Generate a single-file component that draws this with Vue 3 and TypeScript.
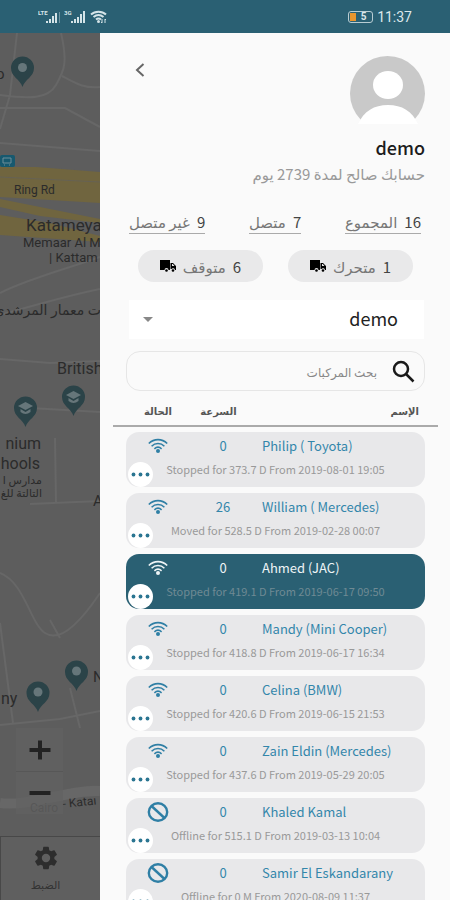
<script setup lang="ts">
import { ref } from 'vue'

interface Vehicle {
  name: string
  speed: number
  online: boolean
  summary: string
}

const account = ref('demo')
const query = ref('')
const selected = ref(2)

const totals = [
  { count: 16, label: 'المجموع' },
  { count: 7, label: 'متصل' },
  { count: 9, label: 'غير متصل' },
]

const motion = [
  { count: 1, label: 'متحرك' },
  { count: 6, label: 'متوقف' },
]

const vehicles: Vehicle[] = [
  { name: 'Philip ( Toyota)', speed: 0, online: true, summary: 'Stopped for 373.7 D From 2019-08-01 19:05' },
  { name: 'William ( Mercedes)', speed: 26, online: true, summary: 'Moved for 528.5 D From 2019-02-28 00:07' },
  { name: 'Ahmed (JAC)', speed: 0, online: true, summary: 'Stopped for 419.1 D From 2019-06-17 09:50' },
  { name: 'Mandy (Mini Cooper)', speed: 0, online: true, summary: 'Stopped for 418.8 D From 2019-06-17 16:34' },
  { name: 'Celina (BMW)', speed: 0, online: true, summary: 'Stopped for 420.6 D From 2019-06-15 21:53' },
  { name: 'Zain Eldin (Mercedes)', speed: 0, online: true, summary: 'Stopped for 437.6 D From 2019-05-29 20:05' },
  { name: 'Khaled Kamal', speed: 0, online: false, summary: 'Offline for 515.1 D From 2019-03-13 10:04' },
  { name: 'Samir El Eskandarany', speed: 0, online: false, summary: 'Offline for 0 M From 2020-08-09 11:37' },
]
</script>

<template>
  <div class="screen">
    <header class="status-bar">
      <div class="signals">
        <svg width="22" height="14" viewBox="0 0 22 14" aria-hidden="true">
          <text x="0" y="5">LTE</text>
          <path d="M8 13v-2h2v2zM11 13V9h2v4zM14 13V6h2v7zM17 13V3h2v10z" />
          <path d="M21 2h1v11h-1z" opacity=".4" />
        </svg>
        <svg width="22" height="14" viewBox="0 0 22 14" aria-hidden="true">
          <text x="0" y="5">3G</text>
          <path d="M7 13v-2h2v2zM10 13V9h2v4zM13 13V7h2v6zM16 13V4h2v9zM19 13V1h2v12z" />
        </svg>
        <svg width="17" height="14" viewBox="0 0 17 14" aria-hidden="true">
          <path d="M1 4.500C5 .800 12 .800 16 4.500M3.500 7C6.500 4.500 10.500 4.500 13.500 7M6 9.500C7.500 8.300 9.500 8.300 11 9.500" class="arc" />
          <circle cx="8.500" cy="11.500" r="1.500" />
          <path d="M12 9v4l-1-1M15 13V9l1 1" class="tiny" />
        </svg>
      </div>
      <div class="clock">
        <span class="battery"><i></i><b>5</b></span>
        <time>11:37</time>
      </div>
    </header>

    <main class="body">
      <section class="map" aria-label="Map">
        <svg class="tiles" width="100%" height="100%" aria-hidden="true">
          <g class="road">
            <path d="M17 0 10 62 0 96M61 0C68 30 64 38 56 52S30 66 0 62M62 43C75 50 85 56 100 54M0 75H65L100 94" />
            <path d="M0 110 100 118M0 260C30 245 70 235 100 224M0 282C35 272 70 262 100 256" />
            <path d="M0 326 50 330 100 328M30 375 100 379M55 405 56 470M30 471 100 468" />
            <path d="M0 540C25 550 30 590 45 600S80 590 100 560M0 590 13 690M50 587 60 605M70 655 80 695" />
            <path d="M0 692 60 686 100 678" />
          </g>
          <path class="minor" d="M0 770C30 774 70 756 100 758" />
          <g class="highway">
            <path d="M0 134 36 134 100 139V170L0 164z" />
            <path d="M0 166 100 186V190L40 183 0 174z" />
            <path d="M0 182 50 190 100 203V209L0 202z" />
          </g>
          <path class="median" d="M0 144 100 149" />
          <rect x="0" y="122" width="15" height="12" rx="2" fill="#17596f" />
          <path d="M3 125h8v5H3zM4 132h1M9 132h1" class="bus" />

          <g class="pin">
            <path id="pin-shape" d="M22.500 54C20 46 11 44 11 35a11.500 11.500 0 0 1 23 0C34 44 25 46 22.500 54z" />
            <circle cx="22.500" cy="34.500" r="4.500" class="hole" />
            <use href="#pin-shape" x="3" y="340" />
            <use href="#pin-shape" x="51" y="329" />
            <use href="#pin-shape" x="15.500" y="625" />
            <circle cx="38" cy="659" r="4.500" class="hole" />
            <use href="#pin-shape" x="54" y="604" />
            <circle cx="76.500" cy="638" r="4.500" class="hole" />
            <path class="hole" d="M18 373 25.500 369 33 373 25.500 377zM20.500 376 25.500 379 30.500 376V379Q25.500 383 20.500 379zM66 362 73.500 358 81 362 73.500 366zM68.500 365 73.500 368 78.500 365V368Q73.500 372 68.500 368z" />
          </g>

          <g class="label">
            <text x="-4" y="46" font-size="15">o</text>
            <text x="14" y="161" font-size="12">Ring Rd</text>
            <text x="26" y="198" font-size="17">Katameya</text>
            <text x="23" y="214" font-size="13">Memaar Al M</text>
            <text x="49" y="229" font-size="13">| Kattam</text>
            <text x="101" y="282" font-size="14" text-anchor="end">ت معمار المرشدي</text>
            <text x="57" y="341" font-size="16">British</text>
            <text x="41" y="416" font-size="16" text-anchor="end">nium</text>
            <text x="40" y="436" font-size="16" text-anchor="end">hools</text>
            <text x="42" y="451" font-size="11" text-anchor="end">مدارس ا</text>
            <text x="42" y="464" font-size="11" text-anchor="end">التالتة للغ</text>
            <text x="93" y="473" font-size="15">A</text>
            <text x="1" y="671" font-size="16">ny</text>
            <text x="93" y="649" font-size="15">N</text>
            <text x="30" y="779" font-size="12" class="faint">Cairo</text>
            <text x="63" y="775" font-size="12" transform="rotate(-6 63 775)">- Kataı</text>
          </g>
        </svg>

        <div class="zoom">
          <button type="button" aria-label="Zoom in">
            <svg width="22" height="22" viewBox="0 0 22 22"><path d="M11 1.500v19M.500 11h21" /></svg>
          </button>
          <button type="button" aria-label="Zoom out">
            <svg width="22" height="22" viewBox="0 0 22 22"><path d="M.500 11h21" /></svg>
          </button>
        </div>

        <button type="button" class="settings">
          <svg width="28" height="28" viewBox="0 0 24 24" aria-hidden="true">
            <path d="M19.140 12.940c.04-.3.06-.61.06-.94 0-.32-.02-.64-.07-.94l2.030-1.580a.49.49 0 0 0 .12-.61l-1.920-3.320a.488.488 0 0 0-.59-.22l-2.390.96c-.5-.38-1.030-.7-1.620-.94l-.36-2.540a.484.484 0 0 0-.48-.41h-3.840c-.24 0-.43.17-.47.41l-.36 2.540c-.59.24-1.130.57-1.620.94l-2.390-.96c-.22-.08-.47 0-.59.22L2.740 8.870c-.12.21-.08.47.12.61l2.030 1.580c-.05.3-.09.63-.09.94s.02.64.07.94l-2.030 1.580a.49.49 0 0 0-.12.61l1.920 3.320c.12.22.37.29.59.22l2.390-.96c.5.38 1.030.7 1.620.94l.36 2.540c.05.24.24.41.48.41h3.840c.24 0 .44-.17.47-.41l.36-2.540c.59-.24 1.130-.56 1.620-.94l2.390.96c.22.08.47 0 .59-.22l1.920-3.320c.12-.22.07-.47-.12-.61l-2.010-1.580zM12 15.600A3.600 3.600 0 1 1 12 8.400a3.600 3.600 0 0 1 0 7.200z" />
          </svg>
          <span>الضبط</span>
        </button>
      </section>

      <aside class="drawer" dir="rtl">
        <div class="profile">
          <div class="identity">
            <svg class="avatar" width="75" height="68" viewBox="0 0 75 68" aria-hidden="true">
              <circle cx="37.500" cy="37.500" r="37.500" fill="#c9c9c9" />
              <ellipse cx="38" cy="29" rx="15" ry="14" fill="#fff" />
              <path d="M8 68C14 55 24 49 38 49s24 6 30 19v8H8z" fill="#fff" />
            </svg>
            <h1>demo</h1>
            <p>حسابك صالح لمدة 2739 يوم</p>
          </div>
          <button type="button" class="back" aria-label="رجوع">
            <svg width="10" height="14" viewBox="0 0 10 14"><path d="M8.500 1 2 7l6.500 6" /></svg>
          </button>
        </div>

        <nav class="totals">
          <a v-for="item in totals" :key="item.label" href="#vehicles">
            <b>{{ item.count }}</b><span>{{ item.label }}</span>
          </a>
        </nav>

        <div class="motion">
          <button v-for="item in motion" :key="item.label" type="button">
            <b>{{ item.count }}</b>
            <span>{{ item.label }}</span>
            <svg width="16" height="12" viewBox="0 0 16 12" aria-hidden="true">
              <path d="M0 0h10v10H8.500a2 2 0 0 0-4 0H0zM10.500 3H13l3 3v4h-1a2 2 0 0 0-3.500-1h-1zM12 4v2h2.500L12.800 4z" fill-rule="evenodd" />
              <circle cx="6.500" cy="10.500" r="1.300" />
              <circle cx="13" cy="10.500" r="1.300" />
            </svg>
          </button>
        </div>

        <div class="picker">
          <select v-model="account" aria-label="الحساب">
            <option value="demo">demo</option>
          </select>
          <svg width="10" height="5" viewBox="0 0 10 5" aria-hidden="true"><path d="M0 0h10L5 5z" /></svg>
        </div>

        <label class="search">
          <svg width="23" height="23" viewBox="0 0 23 23" aria-hidden="true">
            <circle cx="9" cy="9" r="7" />
            <path d="m14 14 7.500 7.500" />
          </svg>
          <input v-model="query" type="text" placeholder="بحث المركبات" aria-label="بحث المركبات" />
        </label>

        <table id="vehicles" class="vehicles">
          <thead>
            <tr>
              <th scope="col">الإسم</th>
              <th scope="col">السرعة</th>
              <th scope="col">الحالة</th>
            </tr>
          </thead>
          <tbody>
            <tr v-for="(vehicle, index) in vehicles" :key="vehicle.name" :class="{ active: index === selected }" @click="selected = index">
              <td class="name" dir="ltr">{{ vehicle.name }}</td>
              <td class="speed">{{ vehicle.speed }}</td>
              <td class="state">
                <svg v-if="vehicle.online" class="wifi" width="20" height="16" viewBox="0 0 20 16" aria-hidden="true">
                  <path d="M.800 5.500C6 .300 14 .300 19.200 5.500M3.600 8.200C7.200 4.600 12.800 4.600 16.400 8.200M6.400 10.800C8.500 8.900 11.500 8.900 13.600 10.800" />
                  <circle cx="10" cy="13" r="2" />
                </svg>
                <svg v-else class="blocked" width="22" height="20" viewBox="0 0 22 20" aria-hidden="true">
                  <ellipse cx="11" cy="10" rx="9.200" ry="8.700" />
                  <path d="M4.500 4 17.500 16" />
                </svg>
              </td>
              <td class="summary" dir="ltr">{{ vehicle.summary }}</td>
              <td class="more">
                <button type="button" aria-label="المزيد" @click.stop>
                  <svg width="19" height="5" viewBox="0 0 19 5">
                    <circle cx="2.500" cy="2.500" r="1.900" />
                    <circle cx="9.500" cy="2.500" r="1.900" />
                    <circle cx="16.500" cy="2.500" r="1.900" />
                  </svg>
                </button>
              </td>
            </tr>
          </tbody>
        </table>
      </aside>
    </main>
  </div>
</template>

<style>
body {
  margin: 0;
  overflow: hidden;
}
</style>

<style scoped>
.screen {
  display: flex;
  flex-direction: column;
  height: 100vh;
  overflow: hidden;
  background: #fafafa;
  color: #222;
  font-family: "Noto Sans CJK SC", "DejaVu Sans", sans-serif;
}

.screen * {
  box-sizing: border-box;
}

button,
select,
input {
  padding: 0;
  border: 0;
  background: none;
  color: inherit;
  font: inherit;
}

svg {
  display: block;
  flex: none;
}

.status-bar {
  display: flex;
  flex: none;
  align-items: center;
  justify-content: space-between;
  height: 33px;
  padding: 0 38px;
  background: #2a6073;
  color: #dce8ec;
}

.signals,
.clock {
  display: flex;
  align-items: center;
  gap: 4px;
}

.signals svg {
  fill: #d5e4e8;
}

.signals text {
  font: bold 6px Roboto, sans-serif;
}

.signals .tiny,
.signals .arc {
  fill: none;
  stroke: #d5e4e8;
  stroke-width: 1;
}

.signals .arc {
  stroke-width: 2;
}

.clock time {
  font: 14px/16px Roboto, sans-serif;
}

.battery {
  display: flex;
  align-items: center;
  width: 25px;
  height: 12px;
  padding: 1px;
  border: 1px solid #b9cdd3;
  border-radius: 3px;
}

.battery i {
  width: 6px;
  height: 8px;
  background: #e8962e;
}

.battery b {
  flex: 1;
  font: bold 10px/9px Roboto, sans-serif;
  text-align: center;
}

.body {
  display: flex;
  flex: 1;
  min-height: 0;
}

.map {
  display: flex;
  flex: 0 0 100px;
  flex-direction: column;
  justify-content: flex-end;
  position: relative;
  overflow: hidden;
  background: #5d5d5d;
}

.tiles {
  position: absolute;
  inset: 0;
}

.road path,
.minor {
  fill: none;
  stroke: #676767;
  stroke-width: 2;
}

.minor {
  stroke-width: 10;
}

.highway {
  fill: #70653f;
}

.median {
  fill: none;
  stroke: #666254;
}

.bus {
  fill: none;
  stroke: #6f8f9a;
}

.pin {
  fill: #2b4348;
}

.hole {
  fill: #66767a;
}

.label {
  fill: #2b2b2b;
  font-family: Roboto, "DejaVu Sans", sans-serif;
}

.faint {
  fill: #3c3c3c;
}

.zoom {
  position: relative;
  width: 47px;
  margin: 0 0 22px 16px;
  background: rgb(98 98 98 / 70%);
}

.zoom button {
  display: grid;
  place-items: center;
  width: 100%;
  height: 43px;
}

.zoom button + button {
  border-top: 1px solid #575757;
}

.zoom path {
  stroke: #222;
  stroke-width: 4;
}

.settings {
  display: flex;
  flex-direction: column;
  align-items: center;
  position: relative;
  gap: 4px;
  height: 64px;
  padding: 7px 10px 0 0;
  border: 1px solid #484848;
  border-width: 1px 0 0 1px;
  background: #5f5f5f;
  color: #333;
  font-size: 11px;
  line-height: 16px;
}

.settings svg {
  fill: #2d2d2d;
}

.drawer {
  display: flex;
  flex: 1;
  flex-direction: column;
  min-width: 0;
  padding: 23px 25px 0 26px;
  overflow: hidden;
  background: #fafafa;
}

.drawer > * {
  flex: none;
}

.profile {
  display: flex;
  align-items: flex-start;
  justify-content: space-between;
}

.profile h1 {
  margin: 10px 0 0;
  color: #1c1c1c;
  font-size: 18px;
  font-weight: 500;
  line-height: 26px;
}

.profile p {
  margin: 2px 0 0;
  color: #999;
  font-size: 15px;
  line-height: 24px;
}

.back {
  padding: 7px 9px;
}

.back path {
  fill: none;
  stroke: #666;
  stroke-width: 2;
}

.totals {
  display: flex;
  justify-content: space-between;
  margin-top: 25px;
  padding: 0 4px 0 3px;
}

.totals a {
  display: flex;
  gap: 7px;
  border-bottom: 1px solid #aaa;
  color: #777;
  font-size: 15px;
  line-height: 22px;
  text-decoration: none;
}

.totals b,
.motion b {
  color: #444;
  font-weight: 400;
}

.motion {
  display: flex;
  gap: 25px;
  margin-top: 16px;
  padding: 0 12px;
}

.motion button {
  display: flex;
  flex: 1;
  align-items: center;
  justify-content: center;
  gap: 7px;
  height: 32px;
  border-radius: 16px;
  background: #e9e9ea;
  color: #777;
  font-size: 15px;
}

.picker {
  position: relative;
  margin: 18px 1px 0 3px;
}

.picker select {
  display: block;
  width: 100%;
  height: 39px;
  padding: 0 26px 4px;
  appearance: none;
  background: #fff;
  color: #222;
  font-size: 18px;
}

.picker svg {
  position: absolute;
  top: 17px;
  left: 14px;
  fill: #888;
}

.search {
  display: flex;
  align-items: center;
  gap: 15px;
  height: 40px;
  margin-top: 12px;
  padding: 0 9px;
  border: 1px solid #e6e6e6;
  border-radius: 14px;
}

.search svg {
  fill: none;
  stroke: #1a1a1a;
  stroke-width: 2.5;
}

.search input {
  flex: 1;
  min-width: 0;
  font-size: 12px;
  outline: none;
}

.search input::placeholder {
  color: #888;
}

.vehicles,
.vehicles thead {
  display: block;
}

.vehicles thead {
  margin: 6px -13px 0;
  padding: 0 13px;
  border-bottom: 2px solid #aaa;
}

.vehicles tr {
  display: grid;
  grid-template-columns: 1fr 66px 64px;
}

.vehicles th {
  padding: 0;
  color: #555;
  font-size: 10px;
  font-weight: 700;
  line-height: 28px;
}

.vehicles th:first-child {
  padding-right: 6px;
  text-align: right;
}

.vehicles th:nth-child(2) {
  padding-right: 9px;
}

.vehicles tbody {
  display: flex;
  flex-direction: column;
  gap: 6px;
  margin-top: 5px;
}

.vehicles tbody tr {
  grid-template-rows: 28px 18px;
  position: relative;
  height: 55px;
  border-radius: 13px;
  background: #e8e8ea;
  color: #3386aa;
  cursor: pointer;
}

.vehicles td {
  padding: 0;
}

.vehicles .name {
  padding-left: 6px;
  font-size: 13px;
  line-height: 28px;
  white-space: nowrap;
}

.vehicles .speed {
  font-size: 13px;
  line-height: 28px;
  text-align: center;
}

.vehicles .state {
  display: grid;
  place-items: center;
}

.wifi path,
.blocked {
  fill: none;
  stroke: #2f7fa5;
  stroke-width: 1.6;
}

.wifi circle {
  fill: #2f7fa5;
}

.blocked {
  stroke-width: 2.4;
}

.vehicles .summary {
  grid-column: 1 / -1;
  color: #999;
  font-size: 11px;
  line-height: 18px;
  text-align: center;
  white-space: nowrap;
}

.vehicles .more {
  position: absolute;
  bottom: 0;
  left: 2px;
}

.more button {
  display: grid;
  place-items: center;
  width: 25px;
  height: 25px;
  border-radius: 50%;
  background: #fff;
}

.more circle {
  fill: #2a7591;
}

.vehicles .active {
  background: #2a6073;
  color: #eef4f6;
}

.active .wifi path {
  stroke: #eef4f6;
}

.active .wifi circle {
  fill: #eef4f6;
}

.vehicles .active .summary {
  color: #6f8a94;
}
</style>
